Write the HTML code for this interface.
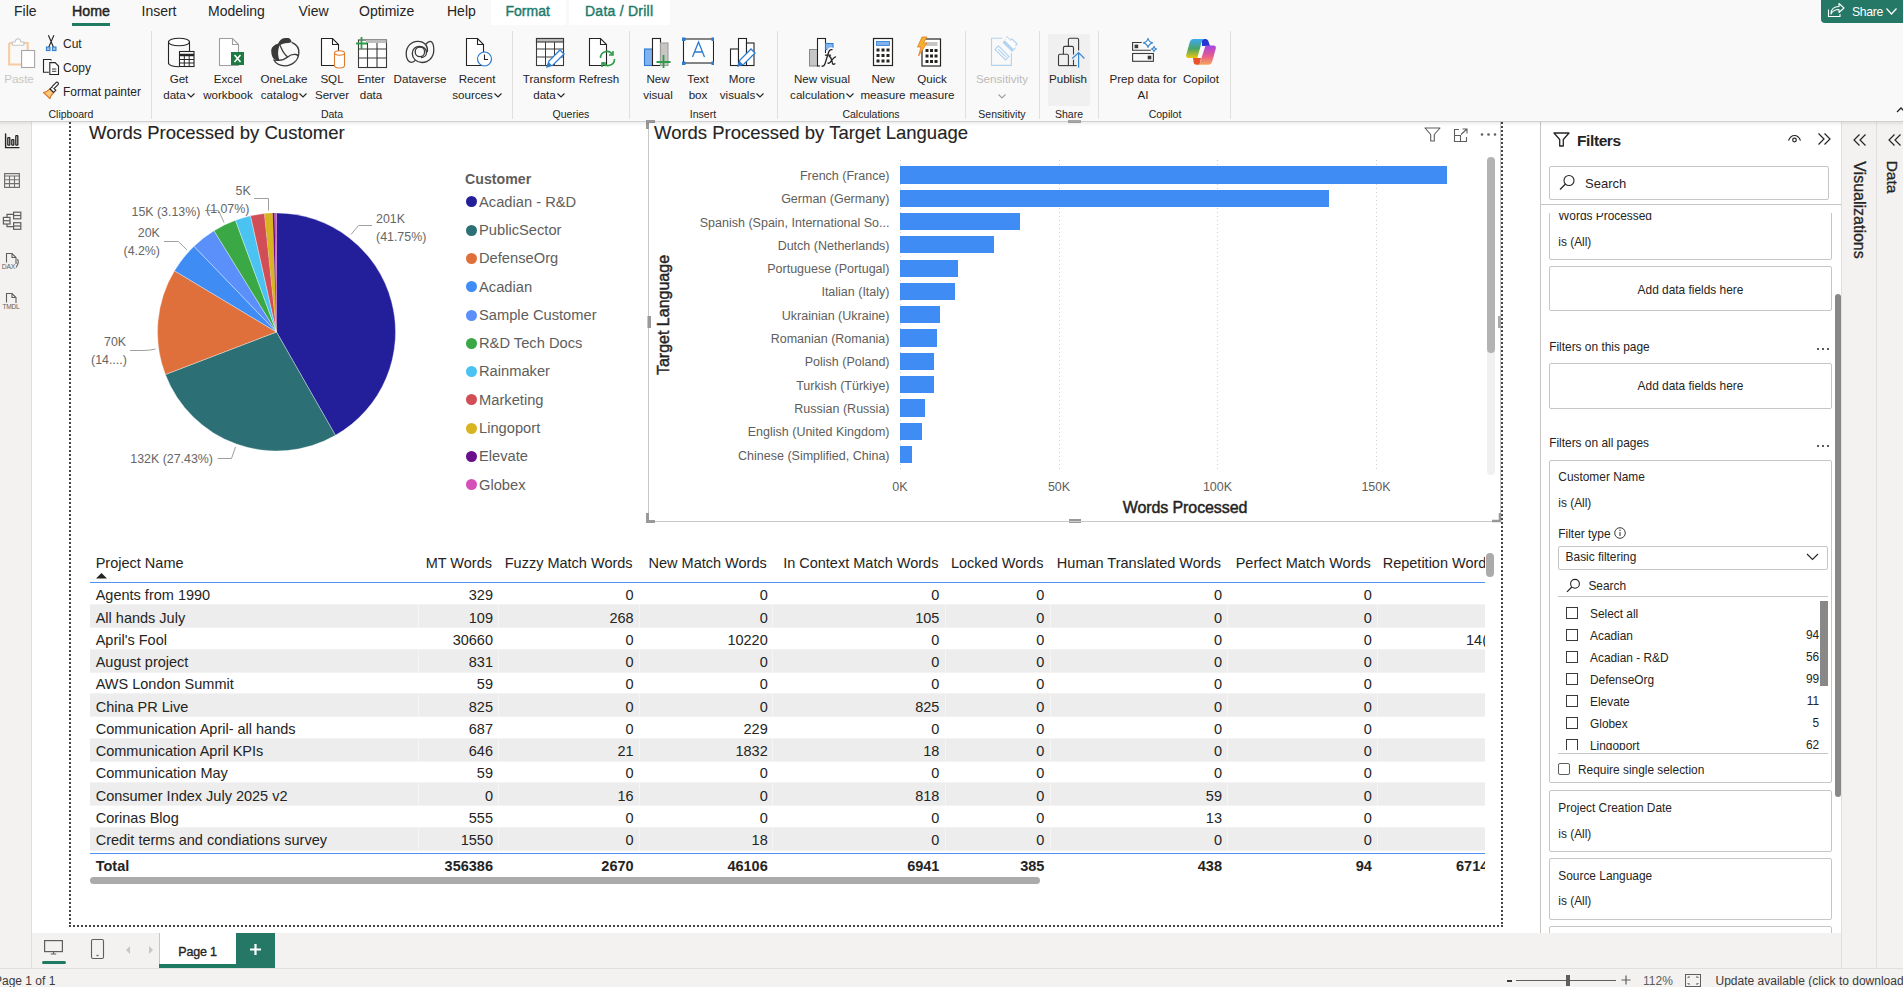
<!DOCTYPE html>
<html><head><meta charset="utf-8">
<style>
*{box-sizing:border-box;margin:0;padding:0}
html,body{width:1903px;height:987px;overflow:hidden;background:#f9f9f9;font-family:"Liberation Sans",sans-serif;color:#252423}
.a{position:absolute}
.t{position:absolute;white-space:nowrap;line-height:1}
#tabs{left:0;top:0;width:1903px;height:25px;background:#f9f9f9}
#ribbon{left:0;top:25px;width:1903px;height:97px;background:#f9f9f9;border-bottom:1px solid #d2d0ce}
.sep{position:absolute;top:31px;width:1px;height:88px;background:#e1dfdd}
.rl{position:absolute;font-size:11.6px;line-height:16px;text-align:center;white-space:nowrap;color:#252423}
.gl{position:absolute;top:107.8px;font-size:10.5px;line-height:12px;text-align:center;white-space:nowrap;color:#252423}
#rail{left:0;top:122px;width:32px;height:846px;background:#f3f2f1;border-right:1px solid #e1dfdd}
#canvas{left:32px;top:122px;width:1508px;height:811px;background:#fff}
#pagebar{left:32px;top:933px;width:1809px;height:35px;background:#f3f2f1}
#status{left:0;top:968px;width:1903px;height:19px;background:#f3f2f1;border-top:1px solid #e1dfdd}
#filters{left:1540px;top:122px;width:301px;height:811px;background:#fff;border-left:1px solid #c8c6c4}
#viz{left:1841px;top:122px;width:35px;height:846px;background:#f3f2f1;border-left:1px solid #e1dfdd}
#datap{left:1876px;top:122px;width:27px;height:846px;background:#f3f2f1;border-left:1px solid #e1dfdd}
</style></head><body>
<!-- TABS -->
<div id="tabs" class="a"></div>
<div id="ribbon" class="a"></div>
<div id="rail" class="a"></div>
<div id="canvas" class="a"></div>
<div id="pagebar" class="a"></div>
<div id="status" class="a"></div>
<div id="filters" class="a"></div>
<div id="viz" class="a"></div>
<div id="datap" class="a"></div>
<!-- TAB LABELS -->
<div class="a" style="left:491px;top:0;width:75px;height:25px;background:#fff"></div>
<div class="a" style="left:569px;top:0;width:101px;height:25px;background:#fff"></div>
<div class="t" style="left:14px;top:4.1px;font-size:14px">File</div>
<div class="t" style="left:72px;top:4.1px;font-size:14.2px;-webkit-text-stroke:0.45px #252423">Home</div>
<div class="a" style="left:72px;top:23px;width:38px;height:3px;background:#1f7a62"></div>
<div class="t" style="left:141.5px;top:4.1px;font-size:14px">Insert</div>
<div class="t" style="left:208px;top:4.1px;font-size:14px">Modeling</div>
<div class="t" style="left:298.5px;top:4.1px;font-size:14px">View</div>
<div class="t" style="left:359px;top:4.1px;font-size:14px">Optimize</div>
<div class="t" style="left:447px;top:4.1px;font-size:14px">Help</div>
<div class="t" style="left:505.5px;top:4.1px;font-size:14px;color:#1b7a6b;-webkit-text-stroke:0.4px #1b7a6b">Format</div>
<div class="t" style="left:585px;top:4.1px;font-size:14px;color:#1b7a6b;-webkit-text-stroke:0.4px #1b7a6b;letter-spacing:0.25px">Data / Drill</div>
<!-- SHARE -->
<div class="a" style="left:1821px;top:0;width:90px;height:23px;background:#267866;border-radius:0 0 4px 4px"></div>
<svg class="a" style="left:1827px;top:2px" width="18" height="16" viewBox="0 0 18 16"><path d="M1.5 7.5v7h11.5v-2.5" fill="none" stroke="#fff" stroke-width="1.1"/><path d="M4 12c0-5 3-7.5 8-7.5V1.5l5 4.5-5 4.5V7.5c-4 0-6.5 1.5-8 4.5z" fill="none" stroke="#fff" stroke-width="1.1" stroke-linejoin="round"/></svg>
<div class="t" style="left:1852px;top:5.8px;font-size:12.2px;letter-spacing:-0.3px;color:#fff">Share</div>
<svg class="a" style="left:1886px;top:8px" width="11" height="7" viewBox="0 0 11 7"><path d="M0.5 0.5l5 5.5 5-5.5" fill="none" stroke="#fff" stroke-width="1.2"/></svg>

<!-- RIBBON: separators -->
<div class="sep" style="left:151px"></div>
<div class="sep" style="left:512px"></div>
<div class="sep" style="left:629px"></div>
<div class="sep" style="left:777px"></div>
<div class="sep" style="left:965px"></div>
<div class="sep" style="left:1039px"></div>
<div class="sep" style="left:1098px"></div>
<div class="sep" style="left:1230px"></div>
<!-- Publish hover bg -->
<div class="a" style="left:1048px;top:34px;width:42px;height:72px;background:#f0f0f0"></div>

<!-- Clipboard -->

<svg class="a" style="left:0;top:30px" width="62" height="70" viewBox="0 30 62 70">
<path d="M9.2 43h3.5M23.5 43h4.2v7M9.2 43v21.5h12" fill="none" stroke="#f5cba6" stroke-width="2.2"/>
<path d="M10.6 44.4v18.7" stroke="#fdf1d6" stroke-width="0.8"/>
<path d="M12.3 45.3v-3.3h2.8c.3-2 1.4-3.3 2.9-3.3s2.6 1.3 2.9 3.3h3v3.3z" fill="#fff" stroke="#c8c6c4" stroke-width="1.1"/>
<rect x="21.6" y="50.5" width="13" height="17" fill="#fff" stroke="#a8a6a4" stroke-width="1.1"/>
<path d="M48.4 35.3l5.3 12.4M53.9 35.3l-5.4 12.4" stroke="#252423" stroke-width="1.1" fill="none"/>
<rect x="46.4" y="47" width="3.6" height="3.6" fill="#a9bcd2" stroke="#2b7bd0" stroke-width="1"/>
<rect x="52.4" y="47" width="3.6" height="3.6" fill="#a9bcd2" stroke="#2b7bd0" stroke-width="1"/>
<path d="M48.8 72.3H43.5V59.5h7.2l.8.8" fill="none" stroke="#252423" stroke-width="1.1"/>
<path d="M49.8 62.6h5.3l3.4 3.4v8.5h-8.7z" fill="#fff" stroke="#252423" stroke-width="1.1"/>
<path d="M52 69h4.3M52 71.3h4.3" stroke="#252423" stroke-width="0.9"/>
<path d="M43.5 92.5c2.8-.6 4.8-1.8 6.5-3.6l3.6 3.6c-1.8 1.7-3 3.7-3.6 6.2z" fill="#f6c97d" stroke="#d9731f" stroke-width="1.1" stroke-linejoin="round"/>
<path d="M50 88.9l2.2-2.2 3.6 3.6-2.2 2.2z" fill="#fff" stroke="#252423" stroke-width="1.1"/>
<path d="M54 88.7l4-4c.6-.6.6-1.4 0-2-.6-.6-1.4-.6-2 0l-4 4" fill="#fff" stroke="#252423" stroke-width="1.1"/>
</svg>
<div class="rl" style="left:-1px;top:71px;width:40px;color:#c8c6c4">Paste</div>

<div class="t" style="left:63px;top:38.4px;font-size:12px">Cut</div>

<div class="t" style="left:63px;top:62.3px;font-size:12px">Copy</div>

<div class="t" style="left:63px;top:85.6px;font-size:12px">Format painter</div>
<div class="gl" style="left:31px;width:80px">Clipboard</div>

<!-- Data group -->
<svg class="a" style="left:167px;top:37px" width="32" height="32" viewBox="0 0 32 32"><ellipse cx="12" cy="5" rx="10.5" ry="3.8" fill="#fff" stroke="#252423" stroke-width="1.1"/><path d="M1.5 5v21c0 2.1 4.7 3.8 10.5 3.8" fill="none" stroke="#252423" stroke-width="1.1"/><path d="M22.5 5v10" stroke="#252423" stroke-width="1.1"/><rect x="12.5" y="14.5" width="14.5" height="15" fill="#fff" stroke="#252423" stroke-width="1.1"/><path d="M12.5 18h14.5" stroke="#252423" stroke-width="2.5"/><path d="M12.5 22.5h14.5M12.5 26h14.5M17.3 18v11.5M22.2 18v11.5" stroke="#252423" stroke-width="1"/></svg>
<div class="rl" style="left:154px;top:71.3px;width:50px">Get</div>
<div class="rl" style="left:154px;top:87.3px;width:50px">data<svg width="8" height="5" viewBox="0 0 8 5" style="vertical-align:1px;margin-left:1px"><path d="M0.5 0.5l3.5 3.5 3.5-3.5" fill="none" stroke="#252423" stroke-width="1.1"/></svg></div>
<svg class="a" style="left:218px;top:37px" width="32" height="32" viewBox="0 0 32 32"><path d="M1.5 1.5h13l6 6v21h-19z" fill="#fff" stroke="#a19f9d" stroke-width="1.1"/><path d="M14.5 1.5v6h6" fill="none" stroke="#a19f9d" stroke-width="1.1"/><rect x="13" y="15" width="13" height="13" fill="#1f7a42"/><path d="M16.5 18l6 7M22.5 18l-6 7" stroke="#fff" stroke-width="1.6"/></svg>
<div class="rl" style="left:198px;top:71.3px;width:60px">Excel</div>
<div class="rl" style="left:198px;top:87.3px;width:60px">workbook</div>
<svg class="a" style="left:265px;top:32px" width="40" height="40" viewBox="0 0 40 40"><g fill="none" stroke="#3b3a39" stroke-width="1.3"><path d="M26.7 10.3C32 12.5 34.5 17 33.8 22 32.8 29 27 33.8 20 33.8 14.5 33.8 10.5 31 8.5 27.5"/><path d="M15 13.2C16.5 16 17.5 21 22.7 24.9 25 23 28 22 31 22.5 32.2 22.8 33 23.5 33.5 24"/><path d="M9.5 28C14 29 19 28 22.7 25"/></g><path d="M13 11.8C14.5 8.5 16.5 6.3 20 6.1H23.5C25 6.3 26 8 26.7 10.3 25 10.8 23.5 11.1 22.7 11.1 19.5 11.3 16.5 12 14.6 13.4 13.5 16 12.8 19.5 13.2 23 13.5 25.5 14 27 14.6 28 12.5 28.5 10 28 8.1 26.3 6.5 23 6 20.3 6.3 17.5 7 15 9.5 12.5 13 11.8z" fill="#3b3a39"/></svg>
<div class="rl" style="left:252px;top:71.3px;width:64px">OneLake</div>
<div class="rl" style="left:252px;top:87.3px;width:64px">catalog<svg width="8" height="5" viewBox="0 0 8 5" style="vertical-align:1px;margin-left:1px"><path d="M0.5 0.5l3.5 3.5 3.5-3.5" fill="none" stroke="#252423" stroke-width="1.1"/></svg></div>
<svg class="a" style="left:320px;top:37px" width="32" height="32" viewBox="0 0 32 32"><path d="M1.5 1.5h11l6 6v21h-17z" fill="#fff" stroke="#252423" stroke-width="1.1"/><path d="M12.5 1.5v6h6" fill="none" stroke="#252423" stroke-width="1.1"/><path d="M14.5 16v12.5c0 1.5 2.2 2.5 5 2.5s5-1 5-2.5V16" fill="#fff" stroke="#e07c2e" stroke-width="1.1"/><ellipse cx="19.5" cy="16" rx="5" ry="2.2" fill="#fff" stroke="#e07c2e" stroke-width="1.1"/></svg>
<div class="rl" style="left:307px;top:71.3px;width:50px">SQL</div>
<div class="rl" style="left:307px;top:87.3px;width:50px">Server</div>
<svg class="a" style="left:356px;top:37px" width="32" height="32" viewBox="0 0 32 32"><rect x="2.5" y="3" width="28" height="27.5" fill="#fff" stroke="#3b3a39" stroke-width="1.1"/><rect x="10" y="3" width="20.5" height="3" fill="#bdbdbd"/><path d="M2.5 12h28M2.5 21h28M11.5 6v24.5M21 6v24.5" stroke="#3b3a39" stroke-width="1.1"/><path d="M0 6.5h11M5.5 0v12" stroke="#2e9c4a" stroke-width="1.8"/></svg>
<div class="rl" style="left:346px;top:71.3px;width:50px">Enter</div>
<div class="rl" style="left:346px;top:87.3px;width:50px">data</div>
<svg class="a" style="left:400px;top:32px" width="40" height="40" viewBox="0 0 40 40"><g fill="none" stroke="#3b3a39" stroke-width="1.3"><path d="M25.5 12.5C23.5 10 20.5 9.2 17.5 9.3 11 9.6 6.3 14.5 6.2 21.5 6.1 27 8.5 30.3 11.2 30.3 13 30.3 14.5 29.5 15.5 28.2"/><path d="M25.5 12.5C27 11 29 9.2 30.3 9.4 32.5 9.8 33.8 13 33.8 18 33.7 25.5 28.5 30.5 22 30.5 16.5 30.5 12.3 26.5 12.3 21.5 12.3 17 15.5 14.3 19.5 14.3 24 14.3 26.5 17.5 26.5 20.5 26.5 23.5 24 25.5 21 25.5"/><circle cx="19.9" cy="19.9" r="4.7"/><path d="M25.5 12.5C27.3 14.7 27.8 17.5 27.3 20"/></g></svg>
<div class="rl" style="left:390px;top:71.3px;width:60px">Dataverse</div>
<svg class="a" style="left:465px;top:37px" width="32" height="32" viewBox="0 0 32 32"><path d="M1.5 1.5h11l6 6v21h-17z" fill="#fff" stroke="#252423" stroke-width="1.1"/><path d="M12.5 1.5v6h6" fill="none" stroke="#252423" stroke-width="1.1"/><circle cx="19.5" cy="22" r="7" fill="#fff" stroke="#2b7bd0" stroke-width="1.2"/><path d="M19.5 17.5v5h3.5" fill="none" stroke="#252423" stroke-width="1.1"/></svg>
<div class="rl" style="left:446px;top:71.3px;width:62px">Recent</div>
<div class="rl" style="left:446px;top:87.3px;width:62px">sources<svg width="8" height="5" viewBox="0 0 8 5" style="vertical-align:1px;margin-left:1px"><path d="M0.5 0.5l3.5 3.5 3.5-3.5" fill="none" stroke="#252423" stroke-width="1.1"/></svg></div>
<div class="gl" style="left:292px;width:80px">Data</div>

<!-- Queries -->
<svg class="a" style="left:535px;top:37px" width="32" height="32" viewBox="0 0 32 32"><rect x="1.5" y="1.5" width="27" height="27" fill="#fff" stroke="#3b3a39" stroke-width="1.1"/><rect x="1.5" y="1.5" width="27" height="3.5" fill="#bdbdbd" stroke="#3b3a39" stroke-width="1.1"/><path d="M1.5 12h27M1.5 20h27M10.5 5v23.5M19.5 5v23.5" stroke="#3b3a39" stroke-width="1"/><path d="M12 30l2-6 11-11 4 4-11 11z" fill="#fff" stroke="#2b7bd0" stroke-width="1.3"/><path d="M12 30l1.5-5 3.5 3.5z" fill="#2b7bd0"/></svg>
<div class="rl" style="left:519px;top:71.3px;width:60px">Transform</div>
<div class="rl" style="left:519px;top:87.3px;width:60px">data<svg width="8" height="5" viewBox="0 0 8 5" style="vertical-align:1px;margin-left:1px"><path d="M0.5 0.5l3.5 3.5 3.5-3.5" fill="none" stroke="#252423" stroke-width="1.1"/></svg></div>
<svg class="a" style="left:588px;top:37px" width="32" height="32" viewBox="0 0 32 32"><path d="M1.5 1.5h11l6 6v21h-17z" fill="#fff" stroke="#252423" stroke-width="1.1"/><path d="M12.5 1.5v6h6" fill="none" stroke="#252423" stroke-width="1.1"/><path d="M12.5 21a6.5 6.5 0 0 1 12-3.5M26.5 22a6.5 6.5 0 0 1-12 3.5" fill="none" stroke="#2e9c4a" stroke-width="1.6"/><path d="M25 14v4h-4M14 30v-4h4" fill="none" stroke="#2e9c4a" stroke-width="1.6"/></svg>
<div class="rl" style="left:574px;top:71.3px;width:50px">Refresh</div>
<div class="gl" style="left:531px;width:80px">Queries</div>

<!-- Insert -->
<svg class="a" style="left:643px;top:37px" width="32" height="32" viewBox="0 0 32 32"><rect x="1.5" y="12" width="8" height="16.5" fill="#7fb2ee" stroke="#2b7bd0" stroke-width="1.1"/><rect x="9.5" y="1.5" width="8" height="27" fill="#fff" stroke="#252423" stroke-width="1.1"/><rect x="17.5" y="6" width="7.5" height="22.5" fill="#c8c6c4" stroke="#a19f9d" stroke-width="1.1"/><path d="M13.5 25h14M20.5 18v13" stroke="#2e9c4a" stroke-width="1.8"/></svg>
<div class="rl" style="left:633px;top:71.3px;width:50px">New</div>
<div class="rl" style="left:633px;top:87.3px;width:50px">visual</div>
<svg class="a" style="left:682px;top:37px" width="32" height="32" viewBox="0 0 32 32"><rect x="1.5" y="2" width="30" height="24" fill="#fff" stroke="#252423" stroke-width="1.1"/><rect x="0" y="0.5" width="3.5" height="3.5" fill="#2b7bd0"/><rect x="29.5" y="0.5" width="3.5" height="3.5" fill="#2b7bd0"/><rect x="0" y="24.5" width="3.5" height="3.5" fill="#2b7bd0"/><rect x="29.5" y="24.5" width="3.5" height="3.5" fill="#2b7bd0"/><path d="M10.5 20l6-15 6 15M12.5 15h8" fill="none" stroke="#2b7bd0" stroke-width="1.3"/></svg>
<div class="rl" style="left:673px;top:71.3px;width:50px">Text</div>
<div class="rl" style="left:673px;top:87.3px;width:50px">box</div>
<svg class="a" style="left:729px;top:37px" width="32" height="32" viewBox="0 0 32 32"><rect x="1.5" y="12" width="8" height="16.5" fill="#fff" stroke="#252423" stroke-width="1.1"/><rect x="9.5" y="1.5" width="8" height="27" fill="#fff" stroke="#252423" stroke-width="1.1"/><rect x="17.5" y="6" width="7.5" height="22.5" fill="#fff" stroke="#252423" stroke-width="1.1"/><path d="M9 29l2-6 11-11 4 4-11 11z" fill="#fff" stroke="#2b7bd0" stroke-width="1.3"/><path d="M9 29l1.5-5 3.5 3.5z" fill="#2b7bd0"/></svg>
<div class="rl" style="left:712px;top:71.3px;width:60px">More</div>
<div class="rl" style="left:712px;top:87.3px;width:60px">visuals<svg width="8" height="5" viewBox="0 0 8 5" style="vertical-align:1px;margin-left:1px"><path d="M0.5 0.5l3.5 3.5 3.5-3.5" fill="none" stroke="#252423" stroke-width="1.1"/></svg></div>
<div class="gl" style="left:663px;width:80px">Insert</div>

<!-- Calculations -->
<svg class="a" style="left:806px;top:36px" width="34" height="34" viewBox="0 0 34 34"><rect x="3.5" y="13.5" width="8" height="16.5" fill="#c8c6c4" stroke="#8a8886" stroke-width="1"/><rect x="11.5" y="2.5" width="8" height="27.5" fill="#fff" stroke="#252423" stroke-width="1.1"/><rect x="19.5" y="7.5" width="7.5" height="6" fill="#7fb2ee" stroke="#2b7bd0" stroke-width="1"/><path d="M16 30.2c1.5.3 2.3-.3 3-2.5l3.5-11.2c.8-2.3 1.8-3.2 3.5-2.8M19.5 19.2h5M23.3 20.5c1.2 0 1.6.8 2.3 3.5l.8 3c.5 1.5 1 1.8 2.5.8M29.5 20.8c-1 .3-1.8 1-3.2 2.8l-1.8 2.3c-.9 1.2-1.5 1.7-2.5 1.2" fill="none" stroke="#f9f9f9" stroke-width="4.5" stroke-linecap="round"/><path d="M16 30.2c1.5.3 2.3-.3 3-2.5l3.5-11.2c.8-2.3 1.8-3.2 3.5-2.8M19.5 19.2h5M23.3 20.5c1.2 0 1.6.8 2.3 3.5l.8 3c.5 1.5 1 1.8 2.5.8M29.5 20.8c-1 .3-1.8 1-3.2 2.8l-1.8 2.3c-.9 1.2-1.5 1.7-2.5 1.2" fill="none" stroke="#252423" stroke-width="1.3" stroke-linecap="round"/></svg>
<div class="rl" style="left:782px;top:71.3px;width:80px">New visual</div>
<div class="rl" style="left:782px;top:87.3px;width:80px">calculation<svg width="8" height="5" viewBox="0 0 8 5" style="vertical-align:1px;margin-left:1px"><path d="M0.5 0.5l3.5 3.5 3.5-3.5" fill="none" stroke="#252423" stroke-width="1.1"/></svg></div>
<svg class="a" style="left:872px;top:37px" width="32" height="32" viewBox="0 0 32 32"><rect x="1.5" y="1.5" width="19" height="27" fill="#fff" stroke="#252423" stroke-width="1.2"/><rect x="4.5" y="4.5" width="13" height="4" fill="#7fb2ee" stroke="#2b7bd0" stroke-width="0.8"/><g fill="#252423"><rect x="4.5" y="11.5" width="3" height="3"/><rect x="9.5" y="11.5" width="3" height="3"/><rect x="14.5" y="11.5" width="3" height="3"/><rect x="4.5" y="17" width="3" height="3"/><rect x="9.5" y="17" width="3" height="3"/><rect x="14.5" y="17" width="3" height="3"/><rect x="4.5" y="22.5" width="3" height="3"/><rect x="9.5" y="22.5" width="3" height="3"/><rect x="14.5" y="22.5" width="3" height="3"/></g></svg>
<div class="rl" style="left:853px;top:71.3px;width:60px">New</div>
<div class="rl" style="left:853px;top:87.3px;width:60px">measure</div>
<svg class="a" style="left:915px;top:36px" width="32" height="32" viewBox="0 0 32 32"><rect x="7" y="3" width="18.5" height="27" fill="#fff" stroke="#252423" stroke-width="1.2"/><rect x="10.5" y="6" width="12" height="4" fill="#c8c6c4"/><g fill="#252423"><rect x="10.5" y="13" width="3" height="3"/><rect x="15" y="13" width="3" height="3"/><rect x="19.5" y="13" width="3" height="3"/><rect x="10.5" y="18.5" width="3" height="3"/><rect x="15" y="18.5" width="3" height="3"/><rect x="19.5" y="18.5" width="3" height="3"/><rect x="10.5" y="24" width="3" height="3"/><rect x="15" y="24" width="3" height="3"/><rect x="19.5" y="24" width="3" height="3"/></g><path d="M7 1h5l-3.5 6H12L3.5 20l2.5-9H2.5z" fill="#f6b12c" stroke="#e07c2e" stroke-width="0.8"/></svg>
<div class="rl" style="left:902px;top:71.3px;width:60px">Quick</div>
<div class="rl" style="left:902px;top:87.3px;width:60px">measure</div>
<div class="gl" style="left:831px;width:80px">Calculations</div>

<!-- Sensitivity -->
<svg class="a" style="left:982px;top:32px" width="40" height="40" viewBox="0 0 40 40"><g fill="none" stroke="#b3d2ee" stroke-width="1.1"><path d="M20.3 6.3H9.5v27.1h19.9V21"/><path d="M13 17.4l3.5-3.5 10.5 10.5-3.5 3.5z"/><path d="M16.2 17.2l8 8"/><path d="M24.4 4.3l4 4 1.5-1.5 5.3 5.3-4.3 4.3-5.3-5.3" /></g><path d="M20.5 10.5l4-4 9.5 9.5-4 4z" fill="#b3d2ee"/><path d="M23 8.5l2.5-2.5 8.5 8.5-2.5 2.5z" fill="#fff"/></svg>
<div class="rl" style="left:967px;top:71.3px;width:70px;color:#bdbbb9">Sensitivity</div>
<svg class="a" style="left:998px;top:94px" width="8" height="5" viewBox="0 0 8 5"><path d="M0.5 0.5l3.5 3.5 3.5-3.5" fill="none" stroke="#a19f9d" stroke-width="1.1"/></svg>
<div class="gl" style="left:962px;width:80px">Sensitivity</div>

<!-- Share -->
<svg class="a" style="left:1050px;top:32px" width="40" height="40" viewBox="0 0 40 40"><g fill="none" stroke="#3b3a39" stroke-width="1.1" stroke-linejoin="round"><path d="M8.5 33.6V23.8c0-.9.6-1.5 1.5-1.5h6.9c.9 0 1.5.6 1.5 1.5v9.8"/><path d="M13.4 22.3v-6.4c0-.9.6-1.5 1.5-1.5h7.1c.9 0 1.5.6 1.5 1.5v6.6M23.5 27.8v5.8"/><path d="M18.4 14.4V7.8c0-.9.6-1.5 1.5-1.5h7.2c.9 0 1.5.6 1.5 1.5v10.8"/><path d="M8.5 33.6h18.2"/></g><path d="M28.6 20.8v15M22.3 26.5l6.3-6 5.8 6" fill="none" stroke="#3a87d0" stroke-width="1.2"/></svg>
<div class="rl" style="left:1038px;top:71.3px;width:60px">Publish</div>
<div class="gl" style="left:1029px;width:80px">Share</div>

<!-- Copilot -->
<svg class="a" style="left:1120px;top:32px" width="40" height="40" viewBox="0 0 40 40"><g fill="none" stroke="#3b3a39" stroke-width="1.1"><path d="M21.7 10.5H12.6v7.8h18.2"/><rect x="12.6" y="21.5" width="20.8" height="7.8"/></g><rect x="14.6" y="12.6" width="3.6" height="3.6" fill="#3b3a39"/><rect x="27.7" y="23.7" width="3.6" height="3.6" fill="#3b3a39"/><path d="M28 6.3c.6 2.6 1.8 3.9 4.6 4.6-2.8.7-4 2-4.6 4.6-.6-2.6-1.8-3.9-4.6-4.6 2.8-.7 4-2 4.6-4.6z" fill="#fff" stroke="#3a87d0" stroke-width="1.1" stroke-linejoin="round"/><path d="M34 14.3c.3 1.5 1 2.3 2.6 2.7-1.6.4-2.3 1.2-2.6 2.7-.3-1.5-1-2.3-2.6-2.7 1.6-.4 2.3-1.2 2.6-2.7z" fill="#fff" stroke="#3a87d0" stroke-width="1.1" stroke-linejoin="round"/></svg>
<div class="rl" style="left:1103px;top:71.3px;width:80px">Prep data for</div>
<div class="rl" style="left:1103px;top:87.3px;width:80px">AI</div>
<svg class="a" style="left:1180px;top:32px" width="40" height="40" viewBox="0 0 40 40"><defs><linearGradient id="cpa" x1="0" y1="0" x2="0" y2="1"><stop offset="0" stop-color="#3aaaf5"/><stop offset=".5" stop-color="#4aa36a"/><stop offset="1" stop-color="#e9c80a"/></linearGradient><linearGradient id="cpb" x1="0" y1="0" x2="0" y2="1"><stop offset="0" stop-color="#a444e4"/><stop offset=".55" stop-color="#e85b8c"/><stop offset="1" stop-color="#f6a95a"/></linearGradient></defs><path d="M22 7h3.5c1.5 0 2.5 1 3 2.5L30 14H22z" fill="#2437d4"/><path d="M13.5 7H25c-1.5 0-2.6 1-3.2 2.8L17.3 26H8.5C6.8 26 5.8 24.8 6.2 23L9.5 11C10.2 8.5 11.5 7 13.5 7z" fill="url(#cpa)"/><path d="M13 26h8l-1.5 6.8h-3c-1.5 0-2.5-1-2.8-2.3z" fill="#e8522c"/><path d="M25.5 13.4h8c1.8 0 2.7 1.2 2.3 3L32.5 28.5C31.8 31.2 30.5 32.8 28.2 32.8H17.2c1.5 0 2.6-1 3-2.8z" fill="url(#cpb)"/></svg>
<div class="rl" style="left:1166px;top:71.3px;width:70px">Copilot</div>
<div class="gl" style="left:1125px;width:80px">Copilot</div>
<svg class="a" style="left:1895px;top:106px;z-index:2" width="12" height="8" viewBox="0 0 12 8"><path d="M2 6l4-4 4 4" fill="none" stroke="#252423" stroke-width="1.3"/></svg>

<!-- RAIL ICONS -->
<svg class="a" style="left:0;top:128px" width="24" height="24" viewBox="0 0 24 24"><path d="M5.6 6v13.6H19" fill="none" stroke="#252423" stroke-width="1.4" stroke-linecap="round"/><rect x="7.8" y="9.6" width="2" height="7.6" rx="0.5" fill="none" stroke="#252423" stroke-width="1.3"/><rect x="11.8" y="11.6" width="2" height="5.6" rx="0.5" fill="none" stroke="#252423" stroke-width="1.3"/><rect x="15.8" y="7.6" width="2" height="9.6" rx="0.5" fill="none" stroke="#252423" stroke-width="1.3"/></svg>
<svg class="a" style="left:4px;top:173px" width="16" height="15" viewBox="0 0 16 15"><rect x="0.6" y="0.6" width="14.8" height="13.8" fill="none" stroke="#707070" stroke-width="1.2"/><path d="M0.6 3h14.8M0.6 6.7h14.8M0.6 10.6h14.8M5.5 3v11.4M10.5 3v11.4" stroke="#707070" stroke-width="1.1"/></svg>
<svg class="a" style="left:0;top:208px" width="24" height="24" viewBox="0 0 24 24"><g fill="none" stroke="#605e5c" stroke-width="1.2"><rect x="3.4" y="9.4" width="6.6" height="6.6"/><path d="M3.4 12.7h6.6"/><rect x="13.6" y="4.2" width="7.2" height="6.6"/><path d="M13.6 7.5h7.2"/><rect x="13.6" y="14.7" width="7.2" height="6.6"/><path d="M13.6 18h7.2"/><path d="M7 9.4V6.3h6.6M7 16v2.7h6.6"/></g></svg>
<svg class="a" style="left:0;top:250px" width="24" height="22" viewBox="0 0 24 22"><g fill="none" stroke="#605e5c" stroke-width="1.1"><path d="M6.5 12.5V3.5h5.5l4 4V14"/><path d="M12 3.5v4h4"/><path d="M17.5 9c1.2 2 1 5-1.5 8.5"/></g><text x="1.8" y="18.5" font-family="Liberation Sans" font-size="6.8" fill="#605e5c" letter-spacing="-0.2">DAX</text></svg>
<svg class="a" style="left:0;top:290px" width="24" height="22" viewBox="0 0 24 22"><g fill="none" stroke="#605e5c" stroke-width="1.1"><path d="M6.5 12.5V3.5h5.5l4 4V13"/><path d="M12 3.5v4h4"/></g><text x="2.6" y="19" font-family="Liberation Sans" font-size="6.6" fill="#605e5c" letter-spacing="-0.3">TMDL</text></svg>

<!-- PAGE BORDER -->
<div class="a" style="left:69px;top:122px;width:2px;height:804px;background:repeating-linear-gradient(to bottom,#444 0,#444 2px,transparent 2px,transparent 4px)"></div>
<div class="a" style="left:69px;top:925px;width:1434px;height:2px;background:repeating-linear-gradient(to right,#444 0,#444 2px,transparent 2px,transparent 4px)"></div>

<!-- PIE -->
<div class="t" style="left:89px;top:124px;font-size:18.5px;color:#252423;-webkit-text-stroke:0.12px #252423">Words Processed by Customer</div>
<svg class="a" style="left:0;top:0" width="460" height="520" viewBox="0 0 460 520">
<path d="M276.5 332L276.50 213.00A119 119 0 0 1 335.46 435.37Z" fill="#231f9a" stroke="#fff" stroke-width="0.35"/>
<path d="M276.5 332L335.46 435.37A119 119 0 0 1 165.37 374.55Z" fill="#2c6f75" stroke="#fff" stroke-width="0.35"/>
<path d="M276.5 332L165.37 374.55A119 119 0 0 1 174.45 270.78Z" fill="#e0703b" stroke="#fff" stroke-width="0.35"/>
<path d="M276.5 332L174.45 270.78A119 119 0 0 1 193.96 246.28Z" fill="#3f8cf5" stroke="#fff" stroke-width="0.35"/>
<path d="M276.5 332L193.96 246.28A119 119 0 0 1 214.00 230.73Z" fill="#5b8ff9" stroke="#fff" stroke-width="0.35"/>
<path d="M276.5 332L214.00 230.73A119 119 0 0 1 235.49 220.29Z" fill="#39a845" stroke="#fff" stroke-width="0.35"/>
<path d="M276.5 332L235.49 220.29A119 119 0 0 1 250.54 215.87Z" fill="#4bc3f2" stroke="#fff" stroke-width="0.35"/>
<path d="M276.5 332L250.54 215.87A119 119 0 0 1 264.41 213.62Z" fill="#d14e56" stroke="#fff" stroke-width="0.35"/>
<path d="M276.5 332L264.41 213.62A119 119 0 0 1 272.69 213.06Z" fill="#d8b420"/>
<path d="M276.5 332L272.69 213.06A119 119 0 0 1 274.63 213.01Z" fill="#6a0e8c"/>
<path d="M276.5 332L274.63 213.01A119 119 0 0 1 276.50 213.00Z" fill="#d54fb8"/>
<g fill="none" stroke="#a0a0a0" stroke-width="1">
<path d="M351 234.5L358.5 225.5H372"/>
<path d="M254 198.5H268.5V210.5"/>
<path d="M205 210.5H218.5L224 222.5"/>
<path d="M164 241.5H178.5L187 250"/>
<path d="M130 350.5H143Q150 350.5 155.5 349"/>
<path d="M217.5 458.5H231.5L235.5 447"/>
</g></svg>
<div class="t" style="left:376px;top:212.6px;font-size:12.4px;color:#666">201K</div>
<div class="t" style="left:376px;top:230.5px;font-size:12.4px;color:#666">(41.75%)</div>
<div class="t" style="left:235.5px;top:184.9px;font-size:12.4px;color:#666">5K</div>
<div class="t" style="left:206px;top:202.5px;font-size:12.4px;color:#666">(1.07%)</div>
<div class="t" style="left:131.5px;top:206.3px;font-size:12.4px;color:#666">15K (3.13%)</div>
<div class="t" style="left:137.8px;top:227.3px;font-size:12.4px;color:#666">20K</div>
<div class="t" style="left:123.5px;top:245.2px;font-size:12.4px;color:#666">(4.2%)</div>
<div class="t" style="left:104px;top:336.2px;font-size:12.4px;color:#666">70K</div>
<div class="t" style="left:91px;top:354.1px;font-size:12.4px;color:#666">(14....)</div>
<div class="t" style="left:130.3px;top:452.7px;font-size:12.4px;color:#666">132K (27.43%)</div>
<div class="t" style="left:465px;top:172px;font-size:14.2px;font-weight:bold;color:#605e5c">Customer</div>
<div class="a" style="left:466px;top:196.3px;width:11px;height:11px;border-radius:50%;background:#231f9a"></div>
<div class="t" style="left:479px;top:194.6px;font-size:14.7px;color:#605e5c">Acadian - R&amp;D</div>
<div class="a" style="left:466px;top:224.6px;width:11px;height:11px;border-radius:50%;background:#2c6f75"></div>
<div class="t" style="left:479px;top:222.9px;font-size:14.7px;color:#605e5c">PublicSector</div>
<div class="a" style="left:466px;top:252.9px;width:11px;height:11px;border-radius:50%;background:#e0703b"></div>
<div class="t" style="left:479px;top:251.2px;font-size:14.7px;color:#605e5c">DefenseOrg</div>
<div class="a" style="left:466px;top:281.2px;width:11px;height:11px;border-radius:50%;background:#3f8cf5"></div>
<div class="t" style="left:479px;top:279.5px;font-size:14.7px;color:#605e5c">Acadian</div>
<div class="a" style="left:466px;top:309.5px;width:11px;height:11px;border-radius:50%;background:#5b8ff9"></div>
<div class="t" style="left:479px;top:307.8px;font-size:14.7px;color:#605e5c">Sample Customer</div>
<div class="a" style="left:466px;top:337.8px;width:11px;height:11px;border-radius:50%;background:#39a845"></div>
<div class="t" style="left:479px;top:336.1px;font-size:14.7px;color:#605e5c">R&amp;D Tech Docs</div>
<div class="a" style="left:466px;top:366.1px;width:11px;height:11px;border-radius:50%;background:#4bc3f2"></div>
<div class="t" style="left:479px;top:364.4px;font-size:14.7px;color:#605e5c">Rainmaker</div>
<div class="a" style="left:466px;top:394.4px;width:11px;height:11px;border-radius:50%;background:#d14e56"></div>
<div class="t" style="left:479px;top:392.7px;font-size:14.7px;color:#605e5c">Marketing</div>
<div class="a" style="left:466px;top:422.7px;width:11px;height:11px;border-radius:50%;background:#d8b420"></div>
<div class="t" style="left:479px;top:421.0px;font-size:14.7px;color:#605e5c">Lingoport</div>
<div class="a" style="left:466px;top:451.0px;width:11px;height:11px;border-radius:50%;background:#6a0e8c"></div>
<div class="t" style="left:479px;top:449.3px;font-size:14.7px;color:#605e5c">Elevate</div>
<div class="a" style="left:466px;top:479.3px;width:11px;height:11px;border-radius:50%;background:#d54fb8"></div>
<div class="t" style="left:479px;top:477.6px;font-size:14.7px;color:#605e5c">Globex</div>
<!-- BAR CHART -->
<div class="a" style="left:648px;top:121px;width:1px;height:401px;background:#c8c8c8"></div>
<div class="a" style="left:648px;top:521px;width:852px;height:1px;background:#c8c8c8"></div>
<div class="a" style="left:1500px;top:121px;width:1px;height:400px;background:#c8c8c8"></div>
<svg class="a" style="left:646px;top:120px" width="10" height="10" viewBox="0 0 10 10"><path d="M1.5 9V1.5H9" fill="none" stroke="#999" stroke-width="3"/></svg>
<svg class="a" style="left:646px;top:512px" width="10" height="11" viewBox="0 0 10 11"><path d="M1.5 1V9.5H9" fill="none" stroke="#999" stroke-width="3"/></svg>
<svg class="a" style="left:1490px;top:512px" width="12" height="11" viewBox="0 0 12 11"><path d="M10 1V9H2" fill="none" stroke="#999" stroke-width="2.5"/></svg>
<div class="a" style="left:647px;top:316px;width:4px;height:12px;background:#999;border-left:1px solid #c8c8c8"></div>
<div class="a" style="left:1498px;top:316px;width:3px;height:12px;background:#aaa"></div>
<div class="a" style="left:1069px;top:519px;width:12px;height:4px;background:#999;border-top:1.5px solid #999;border-bottom:1.5px solid #999"></div>
<div class="a" style="left:1069px;top:520.5px;width:12px;height:1px;background:#ccc"></div>
<div class="t" style="left:654px;top:124px;font-size:18.5px;color:#252423;-webkit-text-stroke:0.12px #252423">Words Processed by Target Language</div>
<svg class="a" style="left:1424px;top:127px" width="17" height="15" viewBox="0 0 17 15"><path d="M1 1h15l-5.7 6.5V14H6.7V7.5z" fill="none" stroke="#605e5c" stroke-width="1.1" stroke-linejoin="round"/></svg>
<svg class="a" style="left:1453px;top:128px" width="15" height="14" viewBox="0 0 15 14"><path d="M6 1.5H1.5v12h12V9" fill="none" stroke="#605e5c" stroke-width="1.1"/><path d="M1.5 7.5h6v6" fill="none" stroke="#605e5c" stroke-width="1.1"/><path d="M8 6.5l6-5.5M9.5 1h4.5v4.5" fill="none" stroke="#605e5c" stroke-width="1.1"/></svg>
<svg class="a" style="left:1480px;top:132px" width="17" height="5" viewBox="0 0 17 5"><circle cx="2" cy="2.5" r="1.3" fill="#605e5c"/><circle cx="8.5" cy="2.5" r="1.3" fill="#605e5c"/><circle cx="15" cy="2.5" r="1.3" fill="#605e5c"/></svg>
<div class="a" style="left:899.5px;top:160px;width:1px;height:312px;background:repeating-linear-gradient(to bottom,#d0d0d0 0,#d0d0d0 1px,transparent 1px,transparent 4px)"></div>
<div class="a" style="left:1058.5px;top:160px;width:1px;height:312px;background:repeating-linear-gradient(to bottom,#d0d0d0 0,#d0d0d0 1px,transparent 1px,transparent 4px)"></div>
<div class="a" style="left:1217.0px;top:160px;width:1px;height:312px;background:repeating-linear-gradient(to bottom,#d0d0d0 0,#d0d0d0 1px,transparent 1px,transparent 4px)"></div>
<div class="a" style="left:1375.5px;top:160px;width:1px;height:312px;background:repeating-linear-gradient(to bottom,#d0d0d0 0,#d0d0d0 1px,transparent 1px,transparent 4px)"></div>
<div class="a" style="left:900px;top:166.3px;width:546.7px;height:17.3px;background:#3f8cf5"></div>
<div class="t" style="right:1013.5px;top:169.9px;font-size:12.5px;color:#605e5c">French (France)</div>
<div class="a" style="left:900px;top:189.6px;width:429.0px;height:17.3px;background:#3f8cf5"></div>
<div class="t" style="right:1013.5px;top:193.2px;font-size:12.5px;color:#605e5c">German (Germany)</div>
<div class="a" style="left:900px;top:212.9px;width:119.5px;height:17.3px;background:#3f8cf5"></div>
<div class="t" style="right:1013.5px;top:216.5px;font-size:12.5px;color:#605e5c">Spanish (Spain, International So...</div>
<div class="a" style="left:900px;top:236.2px;width:93.9px;height:17.3px;background:#3f8cf5"></div>
<div class="t" style="right:1013.5px;top:239.8px;font-size:12.5px;color:#605e5c">Dutch (Netherlands)</div>
<div class="a" style="left:900px;top:259.5px;width:57.8px;height:17.3px;background:#3f8cf5"></div>
<div class="t" style="right:1013.5px;top:263.1px;font-size:12.5px;color:#605e5c">Portuguese (Portugal)</div>
<div class="a" style="left:900px;top:282.8px;width:54.6px;height:17.3px;background:#3f8cf5"></div>
<div class="t" style="right:1013.5px;top:286.4px;font-size:12.5px;color:#605e5c">Italian (Italy)</div>
<div class="a" style="left:900px;top:306.1px;width:39.6px;height:17.3px;background:#3f8cf5"></div>
<div class="t" style="right:1013.5px;top:309.7px;font-size:12.5px;color:#605e5c">Ukrainian (Ukraine)</div>
<div class="a" style="left:900px;top:329.4px;width:37.2px;height:17.3px;background:#3f8cf5"></div>
<div class="t" style="right:1013.5px;top:333.0px;font-size:12.5px;color:#605e5c">Romanian (Romania)</div>
<div class="a" style="left:900px;top:352.7px;width:34.3px;height:17.3px;background:#3f8cf5"></div>
<div class="t" style="right:1013.5px;top:356.3px;font-size:12.5px;color:#605e5c">Polish (Poland)</div>
<div class="a" style="left:900px;top:376.0px;width:33.5px;height:17.3px;background:#3f8cf5"></div>
<div class="t" style="right:1013.5px;top:379.6px;font-size:12.5px;color:#605e5c">Turkish (Türkiye)</div>
<div class="a" style="left:900px;top:399.3px;width:25.4px;height:17.3px;background:#3f8cf5"></div>
<div class="t" style="right:1013.5px;top:402.9px;font-size:12.5px;color:#605e5c">Russian (Russia)</div>
<div class="a" style="left:900px;top:422.6px;width:22.2px;height:17.3px;background:#3f8cf5"></div>
<div class="t" style="right:1013.5px;top:426.2px;font-size:12.5px;color:#605e5c">English (United Kingdom)</div>
<div class="a" style="left:900px;top:445.9px;width:12.0px;height:17.3px;background:#3f8cf5"></div>
<div class="t" style="right:1013.5px;top:449.5px;font-size:12.5px;color:#605e5c">Chinese (Simplified, China)</div>
<div class="t" style="left:860px;width:80px;text-align:center;top:480.7px;font-size:12.5px;color:#605e5c">0K</div>
<div class="t" style="left:1019px;width:80px;text-align:center;top:480.7px;font-size:12.5px;color:#605e5c">50K</div>
<div class="t" style="left:1177.5px;width:80px;text-align:center;top:480.7px;font-size:12.5px;color:#605e5c">100K</div>
<div class="t" style="left:1336px;width:80px;text-align:center;top:480.7px;font-size:12.5px;color:#605e5c">150K</div>
<div class="t" style="left:1085px;width:200px;text-align:center;top:499.5px;font-size:16px;-webkit-text-stroke:0.45px #252423;letter-spacing:-0.1px;color:#252423">Words Processed</div>
<div class="t" style="left:663.5px;top:314.5px;font-size:16px;-webkit-text-stroke:0.45px #252423;color:#252423;transform:translate(-50%,-50%) rotate(-90deg)">Target Language</div>
<div class="a" style="left:1487px;top:157px;width:8px;height:318px;background:#f0f0f0;border-radius:4px"></div>
<div class="a" style="left:1487px;top:157px;width:8px;height:196px;background:#b3b3b3;border-radius:4px"></div>
<div class="a" style="left:1501px;top:122px;width:2px;height:804px;background:repeating-linear-gradient(to bottom,#444 0,#444 2px,transparent 2px,transparent 4px)"></div>
<div class="a" style="left:1068px;top:120px;width:13px;height:3px;background:#a6a6a6"></div>
<!-- TABLE -->
<div class="a" style="left:90px;top:540px;width:1395px;height:350px;overflow:hidden">
<div class="t" style="left:5.7px;top:15.9px;font-size:14.5px;color:#252423">Project Name</div>
<svg class="a" style="left:5.5px;top:33px" width="11" height="6" viewBox="0 0 11 6"><path d="M0 5.5L5.5 0 11 5.5z" fill="#252423"/></svg>
<div class="t" style="right:993.0px;top:15.9px;font-size:14.5px;color:#252423">MT Words</div>
<div class="t" style="right:852.4px;top:15.9px;font-size:14.5px;color:#252423">Fuzzy Match Words</div>
<div class="t" style="right:718.3px;top:15.9px;font-size:14.5px;color:#252423">New Match Words</div>
<div class="t" style="right:546.6px;top:15.9px;font-size:14.5px;color:#252423">In Context Match Words</div>
<div class="t" style="right:441.6px;top:15.9px;font-size:14.5px;color:#252423">Locked Words</div>
<div class="t" style="right:264.0px;top:15.9px;font-size:14.5px;color:#252423">Human Translated Words</div>
<div class="t" style="right:114.2px;top:15.9px;font-size:14.5px;color:#252423">Perfect Match Words</div>
<div class="t" style="left:1292.7px;top:15.9px;font-size:14.5px;color:#252423">Repetition Words</div>
<div class="a" style="left:0;top:41.5px;width:1395px;height:1.6px;background:#4f93f5"></div>
<div class="a" style="left:0;top:64.00px;width:1395px;height:24px;background:#ededed;border-top:1.5px solid #f3f3f3;border-bottom:1.5px solid #f3f3f3"></div>
<div class="a" style="left:328.0px;top:64.00px;width:1px;height:24px;background:#f5f5f5"></div>
<div class="a" style="left:408.0px;top:64.00px;width:1px;height:24px;background:#f5f5f5"></div>
<div class="a" style="left:549.0px;top:64.00px;width:1px;height:24px;background:#f5f5f5"></div>
<div class="a" style="left:682.0px;top:64.00px;width:1px;height:24px;background:#f5f5f5"></div>
<div class="a" style="left:855.0px;top:64.00px;width:1px;height:24px;background:#f5f5f5"></div>
<div class="a" style="left:960.0px;top:64.00px;width:1px;height:24px;background:#f5f5f5"></div>
<div class="a" style="left:1137.0px;top:64.00px;width:1px;height:24px;background:#f5f5f5"></div>
<div class="a" style="left:1287.0px;top:64.00px;width:1px;height:24px;background:#f5f5f5"></div>
<div class="a" style="left:0;top:108.60px;width:1395px;height:24px;background:#ededed;border-top:1.5px solid #f3f3f3;border-bottom:1.5px solid #f3f3f3"></div>
<div class="a" style="left:328.0px;top:108.60px;width:1px;height:24px;background:#f5f5f5"></div>
<div class="a" style="left:408.0px;top:108.60px;width:1px;height:24px;background:#f5f5f5"></div>
<div class="a" style="left:549.0px;top:108.60px;width:1px;height:24px;background:#f5f5f5"></div>
<div class="a" style="left:682.0px;top:108.60px;width:1px;height:24px;background:#f5f5f5"></div>
<div class="a" style="left:855.0px;top:108.60px;width:1px;height:24px;background:#f5f5f5"></div>
<div class="a" style="left:960.0px;top:108.60px;width:1px;height:24px;background:#f5f5f5"></div>
<div class="a" style="left:1137.0px;top:108.60px;width:1px;height:24px;background:#f5f5f5"></div>
<div class="a" style="left:1287.0px;top:108.60px;width:1px;height:24px;background:#f5f5f5"></div>
<div class="a" style="left:0;top:153.20px;width:1395px;height:24px;background:#ededed;border-top:1.5px solid #f3f3f3;border-bottom:1.5px solid #f3f3f3"></div>
<div class="a" style="left:328.0px;top:153.20px;width:1px;height:24px;background:#f5f5f5"></div>
<div class="a" style="left:408.0px;top:153.20px;width:1px;height:24px;background:#f5f5f5"></div>
<div class="a" style="left:549.0px;top:153.20px;width:1px;height:24px;background:#f5f5f5"></div>
<div class="a" style="left:682.0px;top:153.20px;width:1px;height:24px;background:#f5f5f5"></div>
<div class="a" style="left:855.0px;top:153.20px;width:1px;height:24px;background:#f5f5f5"></div>
<div class="a" style="left:960.0px;top:153.20px;width:1px;height:24px;background:#f5f5f5"></div>
<div class="a" style="left:1137.0px;top:153.20px;width:1px;height:24px;background:#f5f5f5"></div>
<div class="a" style="left:1287.0px;top:153.20px;width:1px;height:24px;background:#f5f5f5"></div>
<div class="a" style="left:0;top:197.80px;width:1395px;height:24px;background:#ededed;border-top:1.5px solid #f3f3f3;border-bottom:1.5px solid #f3f3f3"></div>
<div class="a" style="left:328.0px;top:197.80px;width:1px;height:24px;background:#f5f5f5"></div>
<div class="a" style="left:408.0px;top:197.80px;width:1px;height:24px;background:#f5f5f5"></div>
<div class="a" style="left:549.0px;top:197.80px;width:1px;height:24px;background:#f5f5f5"></div>
<div class="a" style="left:682.0px;top:197.80px;width:1px;height:24px;background:#f5f5f5"></div>
<div class="a" style="left:855.0px;top:197.80px;width:1px;height:24px;background:#f5f5f5"></div>
<div class="a" style="left:960.0px;top:197.80px;width:1px;height:24px;background:#f5f5f5"></div>
<div class="a" style="left:1137.0px;top:197.80px;width:1px;height:24px;background:#f5f5f5"></div>
<div class="a" style="left:1287.0px;top:197.80px;width:1px;height:24px;background:#f5f5f5"></div>
<div class="a" style="left:0;top:242.40px;width:1395px;height:24px;background:#ededed;border-top:1.5px solid #f3f3f3;border-bottom:1.5px solid #f3f3f3"></div>
<div class="a" style="left:328.0px;top:242.40px;width:1px;height:24px;background:#f5f5f5"></div>
<div class="a" style="left:408.0px;top:242.40px;width:1px;height:24px;background:#f5f5f5"></div>
<div class="a" style="left:549.0px;top:242.40px;width:1px;height:24px;background:#f5f5f5"></div>
<div class="a" style="left:682.0px;top:242.40px;width:1px;height:24px;background:#f5f5f5"></div>
<div class="a" style="left:855.0px;top:242.40px;width:1px;height:24px;background:#f5f5f5"></div>
<div class="a" style="left:960.0px;top:242.40px;width:1px;height:24px;background:#f5f5f5"></div>
<div class="a" style="left:1137.0px;top:242.40px;width:1px;height:24px;background:#f5f5f5"></div>
<div class="a" style="left:1287.0px;top:242.40px;width:1px;height:24px;background:#f5f5f5"></div>
<div class="a" style="left:0;top:287.00px;width:1395px;height:24px;background:#ededed;border-top:1.5px solid #f3f3f3;border-bottom:1.5px solid #f3f3f3"></div>
<div class="a" style="left:328.0px;top:287.00px;width:1px;height:24px;background:#f5f5f5"></div>
<div class="a" style="left:408.0px;top:287.00px;width:1px;height:24px;background:#f5f5f5"></div>
<div class="a" style="left:549.0px;top:287.00px;width:1px;height:24px;background:#f5f5f5"></div>
<div class="a" style="left:682.0px;top:287.00px;width:1px;height:24px;background:#f5f5f5"></div>
<div class="a" style="left:855.0px;top:287.00px;width:1px;height:24px;background:#f5f5f5"></div>
<div class="a" style="left:960.0px;top:287.00px;width:1px;height:24px;background:#f5f5f5"></div>
<div class="a" style="left:1137.0px;top:287.00px;width:1px;height:24px;background:#f5f5f5"></div>
<div class="a" style="left:1287.0px;top:287.00px;width:1px;height:24px;background:#f5f5f5"></div>
<div class="t" style="left:5.7px;top:48.2px;font-size:14.5px;color:#252423">Agents from 1990</div>
<div class="t" style="right:992.0px;top:48.2px;font-size:14.5px;color:#252423">329</div>
<div class="t" style="right:851.4px;top:48.2px;font-size:14.5px;color:#252423">0</div>
<div class="t" style="right:717.3px;top:48.2px;font-size:14.5px;color:#252423">0</div>
<div class="t" style="right:545.6px;top:48.2px;font-size:14.5px;color:#252423">0</div>
<div class="t" style="right:440.6px;top:48.2px;font-size:14.5px;color:#252423">0</div>
<div class="t" style="right:263.0px;top:48.2px;font-size:14.5px;color:#252423">0</div>
<div class="t" style="right:113.2px;top:48.2px;font-size:14.5px;color:#252423">0</div>
<div class="t" style="left:5.7px;top:70.5px;font-size:14.5px;color:#252423">All hands July</div>
<div class="t" style="right:992.0px;top:70.5px;font-size:14.5px;color:#252423">109</div>
<div class="t" style="right:851.4px;top:70.5px;font-size:14.5px;color:#252423">268</div>
<div class="t" style="right:717.3px;top:70.5px;font-size:14.5px;color:#252423">0</div>
<div class="t" style="right:545.6px;top:70.5px;font-size:14.5px;color:#252423">105</div>
<div class="t" style="right:440.6px;top:70.5px;font-size:14.5px;color:#252423">0</div>
<div class="t" style="right:263.0px;top:70.5px;font-size:14.5px;color:#252423">0</div>
<div class="t" style="right:113.2px;top:70.5px;font-size:14.5px;color:#252423">0</div>
<div class="t" style="left:5.7px;top:92.7px;font-size:14.5px;color:#252423">April's Fool</div>
<div class="t" style="right:992.0px;top:92.7px;font-size:14.5px;color:#252423">30660</div>
<div class="t" style="right:851.4px;top:92.7px;font-size:14.5px;color:#252423">0</div>
<div class="t" style="right:717.3px;top:92.7px;font-size:14.5px;color:#252423">10220</div>
<div class="t" style="right:545.6px;top:92.7px;font-size:14.5px;color:#252423">0</div>
<div class="t" style="right:440.6px;top:92.7px;font-size:14.5px;color:#252423">0</div>
<div class="t" style="right:263.0px;top:92.7px;font-size:14.5px;color:#252423">0</div>
<div class="t" style="right:113.2px;top:92.7px;font-size:14.5px;color:#252423">0</div>
<div class="t" style="left:1376.0px;top:92.7px;font-size:14.5px;color:#252423">14(</div>
<div class="t" style="left:5.7px;top:115.0px;font-size:14.5px;color:#252423">August project</div>
<div class="t" style="right:992.0px;top:115.0px;font-size:14.5px;color:#252423">831</div>
<div class="t" style="right:851.4px;top:115.0px;font-size:14.5px;color:#252423">0</div>
<div class="t" style="right:717.3px;top:115.0px;font-size:14.5px;color:#252423">0</div>
<div class="t" style="right:545.6px;top:115.0px;font-size:14.5px;color:#252423">0</div>
<div class="t" style="right:440.6px;top:115.0px;font-size:14.5px;color:#252423">0</div>
<div class="t" style="right:263.0px;top:115.0px;font-size:14.5px;color:#252423">0</div>
<div class="t" style="right:113.2px;top:115.0px;font-size:14.5px;color:#252423">0</div>
<div class="t" style="left:5.7px;top:137.2px;font-size:14.5px;color:#252423">AWS London Summit</div>
<div class="t" style="right:992.0px;top:137.2px;font-size:14.5px;color:#252423">59</div>
<div class="t" style="right:851.4px;top:137.2px;font-size:14.5px;color:#252423">0</div>
<div class="t" style="right:717.3px;top:137.2px;font-size:14.5px;color:#252423">0</div>
<div class="t" style="right:545.6px;top:137.2px;font-size:14.5px;color:#252423">0</div>
<div class="t" style="right:440.6px;top:137.2px;font-size:14.5px;color:#252423">0</div>
<div class="t" style="right:263.0px;top:137.2px;font-size:14.5px;color:#252423">0</div>
<div class="t" style="right:113.2px;top:137.2px;font-size:14.5px;color:#252423">0</div>
<div class="t" style="left:5.7px;top:159.5px;font-size:14.5px;color:#252423">China PR Live</div>
<div class="t" style="right:992.0px;top:159.5px;font-size:14.5px;color:#252423">825</div>
<div class="t" style="right:851.4px;top:159.5px;font-size:14.5px;color:#252423">0</div>
<div class="t" style="right:717.3px;top:159.5px;font-size:14.5px;color:#252423">0</div>
<div class="t" style="right:545.6px;top:159.5px;font-size:14.5px;color:#252423">825</div>
<div class="t" style="right:440.6px;top:159.5px;font-size:14.5px;color:#252423">0</div>
<div class="t" style="right:263.0px;top:159.5px;font-size:14.5px;color:#252423">0</div>
<div class="t" style="right:113.2px;top:159.5px;font-size:14.5px;color:#252423">0</div>
<div class="t" style="left:5.7px;top:181.7px;font-size:14.5px;color:#252423">Communication April- all hands</div>
<div class="t" style="right:992.0px;top:181.7px;font-size:14.5px;color:#252423">687</div>
<div class="t" style="right:851.4px;top:181.7px;font-size:14.5px;color:#252423">0</div>
<div class="t" style="right:717.3px;top:181.7px;font-size:14.5px;color:#252423">229</div>
<div class="t" style="right:545.6px;top:181.7px;font-size:14.5px;color:#252423">0</div>
<div class="t" style="right:440.6px;top:181.7px;font-size:14.5px;color:#252423">0</div>
<div class="t" style="right:263.0px;top:181.7px;font-size:14.5px;color:#252423">0</div>
<div class="t" style="right:113.2px;top:181.7px;font-size:14.5px;color:#252423">0</div>
<div class="t" style="left:5.7px;top:204.0px;font-size:14.5px;color:#252423">Communication April KPIs</div>
<div class="t" style="right:992.0px;top:204.0px;font-size:14.5px;color:#252423">646</div>
<div class="t" style="right:851.4px;top:204.0px;font-size:14.5px;color:#252423">21</div>
<div class="t" style="right:717.3px;top:204.0px;font-size:14.5px;color:#252423">1832</div>
<div class="t" style="right:545.6px;top:204.0px;font-size:14.5px;color:#252423">18</div>
<div class="t" style="right:440.6px;top:204.0px;font-size:14.5px;color:#252423">0</div>
<div class="t" style="right:263.0px;top:204.0px;font-size:14.5px;color:#252423">0</div>
<div class="t" style="right:113.2px;top:204.0px;font-size:14.5px;color:#252423">0</div>
<div class="t" style="left:5.7px;top:226.2px;font-size:14.5px;color:#252423">Communication May</div>
<div class="t" style="right:992.0px;top:226.2px;font-size:14.5px;color:#252423">59</div>
<div class="t" style="right:851.4px;top:226.2px;font-size:14.5px;color:#252423">0</div>
<div class="t" style="right:717.3px;top:226.2px;font-size:14.5px;color:#252423">0</div>
<div class="t" style="right:545.6px;top:226.2px;font-size:14.5px;color:#252423">0</div>
<div class="t" style="right:440.6px;top:226.2px;font-size:14.5px;color:#252423">0</div>
<div class="t" style="right:263.0px;top:226.2px;font-size:14.5px;color:#252423">0</div>
<div class="t" style="right:113.2px;top:226.2px;font-size:14.5px;color:#252423">0</div>
<div class="t" style="left:5.7px;top:248.5px;font-size:14.5px;color:#252423">Consumer Index July 2025 v2</div>
<div class="t" style="right:992.0px;top:248.5px;font-size:14.5px;color:#252423">0</div>
<div class="t" style="right:851.4px;top:248.5px;font-size:14.5px;color:#252423">16</div>
<div class="t" style="right:717.3px;top:248.5px;font-size:14.5px;color:#252423">0</div>
<div class="t" style="right:545.6px;top:248.5px;font-size:14.5px;color:#252423">818</div>
<div class="t" style="right:440.6px;top:248.5px;font-size:14.5px;color:#252423">0</div>
<div class="t" style="right:263.0px;top:248.5px;font-size:14.5px;color:#252423">59</div>
<div class="t" style="right:113.2px;top:248.5px;font-size:14.5px;color:#252423">0</div>
<div class="t" style="left:5.7px;top:270.7px;font-size:14.5px;color:#252423">Corinas Blog</div>
<div class="t" style="right:992.0px;top:270.7px;font-size:14.5px;color:#252423">555</div>
<div class="t" style="right:851.4px;top:270.7px;font-size:14.5px;color:#252423">0</div>
<div class="t" style="right:717.3px;top:270.7px;font-size:14.5px;color:#252423">0</div>
<div class="t" style="right:545.6px;top:270.7px;font-size:14.5px;color:#252423">0</div>
<div class="t" style="right:440.6px;top:270.7px;font-size:14.5px;color:#252423">0</div>
<div class="t" style="right:263.0px;top:270.7px;font-size:14.5px;color:#252423">13</div>
<div class="t" style="right:113.2px;top:270.7px;font-size:14.5px;color:#252423">0</div>
<div class="t" style="left:5.7px;top:293.0px;font-size:14.5px;color:#252423">Credit terms and condiations survey</div>
<div class="t" style="right:992.0px;top:293.0px;font-size:14.5px;color:#252423">1550</div>
<div class="t" style="right:851.4px;top:293.0px;font-size:14.5px;color:#252423">0</div>
<div class="t" style="right:717.3px;top:293.0px;font-size:14.5px;color:#252423">18</div>
<div class="t" style="right:545.6px;top:293.0px;font-size:14.5px;color:#252423">0</div>
<div class="t" style="right:440.6px;top:293.0px;font-size:14.5px;color:#252423">0</div>
<div class="t" style="right:263.0px;top:293.0px;font-size:14.5px;color:#252423">0</div>
<div class="t" style="right:113.2px;top:293.0px;font-size:14.5px;color:#252423">0</div>
<div class="a" style="left:0;top:312.79999999999995px;width:1395px;height:1.6px;background:#4f93f5"></div>
<div class="t" style="left:5.7px;top:318.7px;font-size:14.5px;font-weight:bold;color:#252423">Total</div>
<div class="t" style="right:992.0px;top:318.7px;font-size:14.5px;font-weight:bold;color:#252423">356386</div>
<div class="t" style="right:851.4px;top:318.7px;font-size:14.5px;font-weight:bold;color:#252423">2670</div>
<div class="t" style="right:717.3px;top:318.7px;font-size:14.5px;font-weight:bold;color:#252423">46106</div>
<div class="t" style="right:545.6px;top:318.7px;font-size:14.5px;font-weight:bold;color:#252423">6941</div>
<div class="t" style="right:440.6px;top:318.7px;font-size:14.5px;font-weight:bold;color:#252423">385</div>
<div class="t" style="right:263.0px;top:318.7px;font-size:14.5px;font-weight:bold;color:#252423">438</div>
<div class="t" style="right:113.2px;top:318.7px;font-size:14.5px;font-weight:bold;color:#252423">94</div>
<div class="t" style="left:1366.0px;top:318.7px;font-size:14.5px;font-weight:bold;color:#252423">6714</div>
<div class="a" style="left:0;top:336.5px;width:950px;height:7.7px;background:#ababab;border-radius:4px"></div>
</div>
<div class="a" style="left:1486px;top:553px;width:8px;height:24px;background:#ababab;border-radius:4px"></div>
<!-- FILTERS PANE -->
<svg class="a" style="left:1553px;top:132px" width="17" height="15" viewBox="0 0 17 15"><path d="M1 1h15l-5.7 6.5V14H6.7V7.5z" fill="none" stroke="#252423" stroke-width="1.3" stroke-linejoin="round"/></svg>
<div class="t" style="left:1577px;top:132.5px;font-size:15.5px;font-weight:bold;letter-spacing:-0.4px;color:#252423">Filters</div>
<svg class="a" style="left:1787px;top:133px" width="15" height="11" viewBox="0 0 15 11"><path d="M1.5 7.5C3 4 5 2.5 7.5 2.5S12 4 13.5 7.5" fill="none" stroke="#252423" stroke-width="1.2"/><circle cx="7.5" cy="7" r="1.8" fill="none" stroke="#252423" stroke-width="1.2"/></svg>
<svg class="a" style="left:1817px;top:132px" width="15" height="14" viewBox="0 0 15 14"><path d="M1.5 1.5L7 7l-5.5 5.5M7.5 1.5L13 7l-5.5 5.5" fill="none" stroke="#252423" stroke-width="1.2"/></svg>
<div class="a" style="left:1549px;top:166px;width:280px;height:34px;border:1px solid #c8c6c4;border-radius:2px;background:#fff"></div>
<svg class="a" style="left:1559px;top:174px" width="17" height="17" viewBox="0 0 17 17"><circle cx="10" cy="6.5" r="5" fill="none" stroke="#252423" stroke-width="1.1"/><path d="M6.5 10L1 15.5" stroke="#252423" stroke-width="1.2"/></svg>
<div class="t" style="left:1585px;top:177.0px;font-size:13px;color:#252423">Search</div>
<div class="a" style="left:1541px;top:204px;width:300px;height:1px;background:#c8c6c4"></div>
<div class="a" style="left:1541px;top:212.5px;width:300px;height:720px;overflow:hidden"><div class="a" style="left:0;top:-7.5px;width:300px;height:727px">
<div class="a" style="left:8px;top:-55px;width:283px;height:110px;border:1px solid #c8c6c4;border-radius:2px;background:#fff"></div>
<div class="t" style="left:17.3px;top:5.9px;font-size:11.9px;color:#252423">Words Processed</div>
<div class="t" style="left:17.3px;top:31.5px;font-size:11.9px;color:#252423">is (All)</div>
<div class="a" style="left:8px;top:61px;width:283px;height:45px;border:1px solid #c8c6c4;border-radius:2px;background:#fff"></div>
<div class="t" style="left:8px;width:283px;text-align:center;top:79.6px;font-size:11.9px;color:#252423">Add data fields here</div>
<div class="t" style="left:8.2px;top:136.6px;font-size:11.9px;color:#252423">Filters on this page</div>
<svg class="a" style="left:275px;top:142px" width="14" height="4" viewBox="0 0 14 4"><circle cx="2" cy="2" r="1" fill="#252423"/><circle cx="7" cy="2" r="1" fill="#252423"/><circle cx="12" cy="2" r="1" fill="#252423"/></svg>
<div class="a" style="left:8px;top:158px;width:283px;height:46px;border:1px solid #c8c6c4;border-radius:2px;background:#fff"></div>
<div class="t" style="left:8px;width:283px;text-align:center;top:176.1px;font-size:11.9px;color:#252423">Add data fields here</div>
<div class="t" style="left:8.2px;top:233.3px;font-size:11.9px;color:#252423">Filters on all pages</div>
<svg class="a" style="left:275px;top:238.5px" width="14" height="4" viewBox="0 0 14 4"><circle cx="2" cy="2" r="1" fill="#252423"/><circle cx="7" cy="2" r="1" fill="#252423"/><circle cx="12" cy="2" r="1" fill="#252423"/></svg>
<div class="a" style="left:8px;top:255px;width:283px;height:323px;border:1px solid #c8c6c4;border-radius:2px;background:#fff"></div>
<div class="t" style="left:17.3px;top:267.3px;font-size:11.9px;color:#252423">Customer Name</div>
<div class="t" style="left:17.3px;top:293.4px;font-size:11.9px;color:#252423">is (All)</div>
<div class="t" style="left:17.3px;top:323.6px;font-size:11.9px;color:#252423">Filter type</div>
<svg class="a" style="left:73px;top:322px" width="12" height="12" viewBox="0 0 12 12"><circle cx="6" cy="6" r="5.3" fill="none" stroke="#252423" stroke-width="0.9"/><path d="M6 5v4" stroke="#252423" stroke-width="1"/><circle cx="6" cy="3.3" r="0.7" fill="#252423"/></svg>
<div class="a" style="left:17.3px;top:340.5px;width:270px;height:24px;border:1px solid #c8c6c4;border-radius:2px;background:#fff"></div>
<div class="t" style="left:24.6px;top:347.2px;font-size:11.9px;color:#252423">Basic filtering</div>
<svg class="a" style="left:265px;top:348px" width="13" height="8" viewBox="0 0 13 8"><path d="M1 1l5.5 5.5L12 1" fill="none" stroke="#252423" stroke-width="1.1"/></svg>
<svg class="a" style="left:25px;top:373px" width="15" height="15" viewBox="0 0 15 15"><circle cx="9" cy="5.8" r="4.4" fill="none" stroke="#252423" stroke-width="1.1"/><path d="M5.8 9L1 13.8" stroke="#252423" stroke-width="1.2"/></svg>
<div class="t" style="left:47.4px;top:375.6px;font-size:11.9px;color:#252423">Search</div>
<div class="a" style="left:17px;top:391px;width:270px;height:1px;background:#c8c6c4"></div>
<div class="a" style="left:17px;top:396px;width:270px;height:148.5px;overflow:hidden">
<div class="a" style="left:8px;top:6.2px;width:12px;height:12px;border:1px solid #3b3a39;background:#fff"></div>
<div class="t" style="left:32px;top:8.1px;font-size:11.9px;color:#252423">Select all</div>
<div class="a" style="left:8px;top:28.2px;width:12px;height:12px;border:1px solid #3b3a39;background:#fff"></div>
<div class="t" style="left:32px;top:30.0px;font-size:11.9px;color:#252423">Acadian</div>
<div class="t" style="right:8.8px;top:29.0px;font-size:11.9px;color:#252423">94</div>
<div class="a" style="left:8px;top:50.1px;width:12px;height:12px;border:1px solid #3b3a39;background:#fff"></div>
<div class="t" style="left:32px;top:52.0px;font-size:11.9px;color:#252423">Acadian - R&amp;D</div>
<div class="t" style="right:8.8px;top:51.0px;font-size:11.9px;color:#252423">56</div>
<div class="a" style="left:8px;top:72.1px;width:12px;height:12px;border:1px solid #3b3a39;background:#fff"></div>
<div class="t" style="left:32px;top:73.9px;font-size:11.9px;color:#252423">DefenseOrg</div>
<div class="t" style="right:8.8px;top:72.9px;font-size:11.9px;color:#252423">99</div>
<div class="a" style="left:8px;top:94.0px;width:12px;height:12px;border:1px solid #3b3a39;background:#fff"></div>
<div class="t" style="left:32px;top:95.9px;font-size:11.9px;color:#252423">Elevate</div>
<div class="t" style="right:8.8px;top:94.9px;font-size:11.9px;color:#252423">11</div>
<div class="a" style="left:8px;top:116.0px;width:12px;height:12px;border:1px solid #3b3a39;background:#fff"></div>
<div class="t" style="left:32px;top:117.8px;font-size:11.9px;color:#252423">Globex</div>
<div class="t" style="right:8.8px;top:116.8px;font-size:11.9px;color:#252423">5</div>
<div class="a" style="left:8px;top:137.9px;width:12px;height:12px;border:1px solid #3b3a39;background:#fff"></div>
<div class="t" style="left:32px;top:139.8px;font-size:11.9px;color:#252423">Lingoport</div>
<div class="t" style="right:8.8px;top:138.8px;font-size:11.9px;color:#252423">62</div>
<div class="a" style="left:262px;top:0;width:8px;height:85px;background:#8a8886"></div>
</div>
<div class="a" style="left:17px;top:548px;width:270px;height:1px;background:#c8c6c4"></div>
<div class="a" style="left:17px;top:557.5px;width:12px;height:12px;border:1px solid #605e5c;border-radius:2px;background:#fff"></div>
<div class="t" style="left:37px;top:559.5px;font-size:11.9px;color:#252423">Require single selection</div>
<div class="a" style="left:8px;top:585px;width:283px;height:62px;border:1px solid #c8c6c4;border-radius:2px;background:#fff"></div>
<div class="t" style="left:17.3px;top:597.9px;font-size:11.9px;color:#252423">Project Creation Date</div>
<div class="t" style="left:17.3px;top:623.5px;font-size:11.9px;color:#252423">is (All)</div>
<div class="a" style="left:8px;top:653px;width:283px;height:62px;border:1px solid #c8c6c4;border-radius:2px;background:#fff"></div>
<div class="t" style="left:17.3px;top:666.2px;font-size:11.9px;color:#252423">Source Language</div>
<div class="t" style="left:17.3px;top:691.3px;font-size:11.9px;color:#252423">is (All)</div>
<div class="a" style="left:8px;top:721px;width:283px;height:64px;border:1px solid #c8c6c4;border-radius:2px;background:#fff"></div>
<div class="a" style="left:294px;top:89px;width:6px;height:503px;background:#8a8886;border-radius:3px"></div>
</div></div>
<svg class="a" style="left:1852.5px;top:133px" width="14" height="14" viewBox="0 0 14 14"><path d="M12.5 1.5L7 7l5.5 5.5M6.5 1.5L1 7l5.5 5.5" fill="none" stroke="#252423" stroke-width="1.2"/></svg>
<div class="t" style="left:1858.5px;top:210px;font-size:16px;color:#252423;-webkit-text-stroke:0.3px #252423;transform:translate(-50%,-50%) rotate(90deg)">Visualizations</div>
<svg class="a" style="left:1887.5px;top:133px" width="14" height="14" viewBox="0 0 14 14"><path d="M12.5 1.5L7 7l5.5 5.5M6.5 1.5L1 7l5.5 5.5" fill="none" stroke="#252423" stroke-width="1.2"/></svg>
<div class="t" style="left:1892px;top:177px;font-size:15.5px;color:#252423;-webkit-text-stroke:0.3px #252423;transform:translate(-50%,-50%) rotate(90deg)">Data</div>
<!-- PAGE BAR -->
<svg class="a" style="left:42px;top:939px" width="22" height="17" viewBox="0 0 22 17"><rect x="2.6" y="1.6" width="17.8" height="11" fill="none" stroke="#605e5c" stroke-width="1.2"/><path d="M11.5 12.6v2.2M8.8 15h5.4" stroke="#605e5c" stroke-width="1.1"/></svg>
<div class="a" style="left:42px;top:961px;width:24px;height:3px;background:#1f7a62;border-radius:2px"></div>
<svg class="a" style="left:90px;top:938px" width="16" height="22" viewBox="0 0 16 22"><rect x="1.5" y="1.5" width="12" height="19" rx="1.5" fill="none" stroke="#605e5c" stroke-width="1.1"/><path d="M6.5 17.5h2" stroke="#605e5c" stroke-width="1.3"/></svg>
<svg class="a" style="left:124px;top:945px" width="30" height="10" viewBox="0 0 30 10"><path d="M6 1L2 5l4 4z" fill="#c8c6c4"/><path d="M25 1l4 4-4 4z" fill="#c8c6c4"/></svg>
<div class="a" style="left:159px;top:933px;width:77px;height:35px;background:#fff;border-left:1px solid #c8c6c4"></div>
<div class="a" style="left:159px;top:964px;width:77px;height:4px;background:#1f7a62"></div>
<div class="t" style="left:159px;width:77px;text-align:center;top:945.9px;font-size:12.5px;letter-spacing:-0.2px;-webkit-text-stroke:0.35px #252423;color:#252423">Page 1</div>
<div class="a" style="left:236px;top:933px;width:39px;height:35px;background:#267866"></div>
<svg class="a" style="left:249px;top:943px" width="13" height="13" viewBox="0 0 13 13"><path d="M6.5 1v11M1 6.5h11" stroke="#fff" stroke-width="2.2"/></svg>
<div class="t" style="left:-6px;top:974.8px;font-size:12px;color:#3b3a39">Page 1 of 1</div>
<div class="a" style="left:1507px;top:980px;width:5px;height:1.5px;background:#3b3a39"></div>
<div class="a" style="left:1516px;top:980px;width:100px;height:1px;background:#605e5c"></div>
<div class="a" style="left:1566px;top:975px;width:4px;height:11px;background:#605e5c"></div>
<svg class="a" style="left:1621px;top:975px" width="10" height="10" viewBox="0 0 10 10"><path d="M5 0.5v9M0.5 5h9" stroke="#605e5c" stroke-width="1.2"/></svg>
<div class="t" style="left:1643px;top:974.8px;font-size:12px;color:#605e5c">112%</div>
<svg class="a" style="left:1685px;top:974px" width="16" height="13" viewBox="0 0 16 13"><rect x="0.5" y="0.5" width="15" height="12" fill="none" stroke="#605e5c" stroke-width="1"/><path d="M3 4V3h2M11 3h2v1M13 9v1h-2M5 10H3V9" fill="none" stroke="#605e5c" stroke-width="1"/></svg>
<div class="t" style="left:1715.5px;top:974.8px;font-size:12px;color:#3b3a39">Update available (click to download</div>
<div class="a" style="left:0;top:122px;width:1903px;height:4px;background:linear-gradient(to bottom,rgba(0,0,0,0.07),rgba(0,0,0,0))"></div>
<!--CONTENT-->
</body></html>
